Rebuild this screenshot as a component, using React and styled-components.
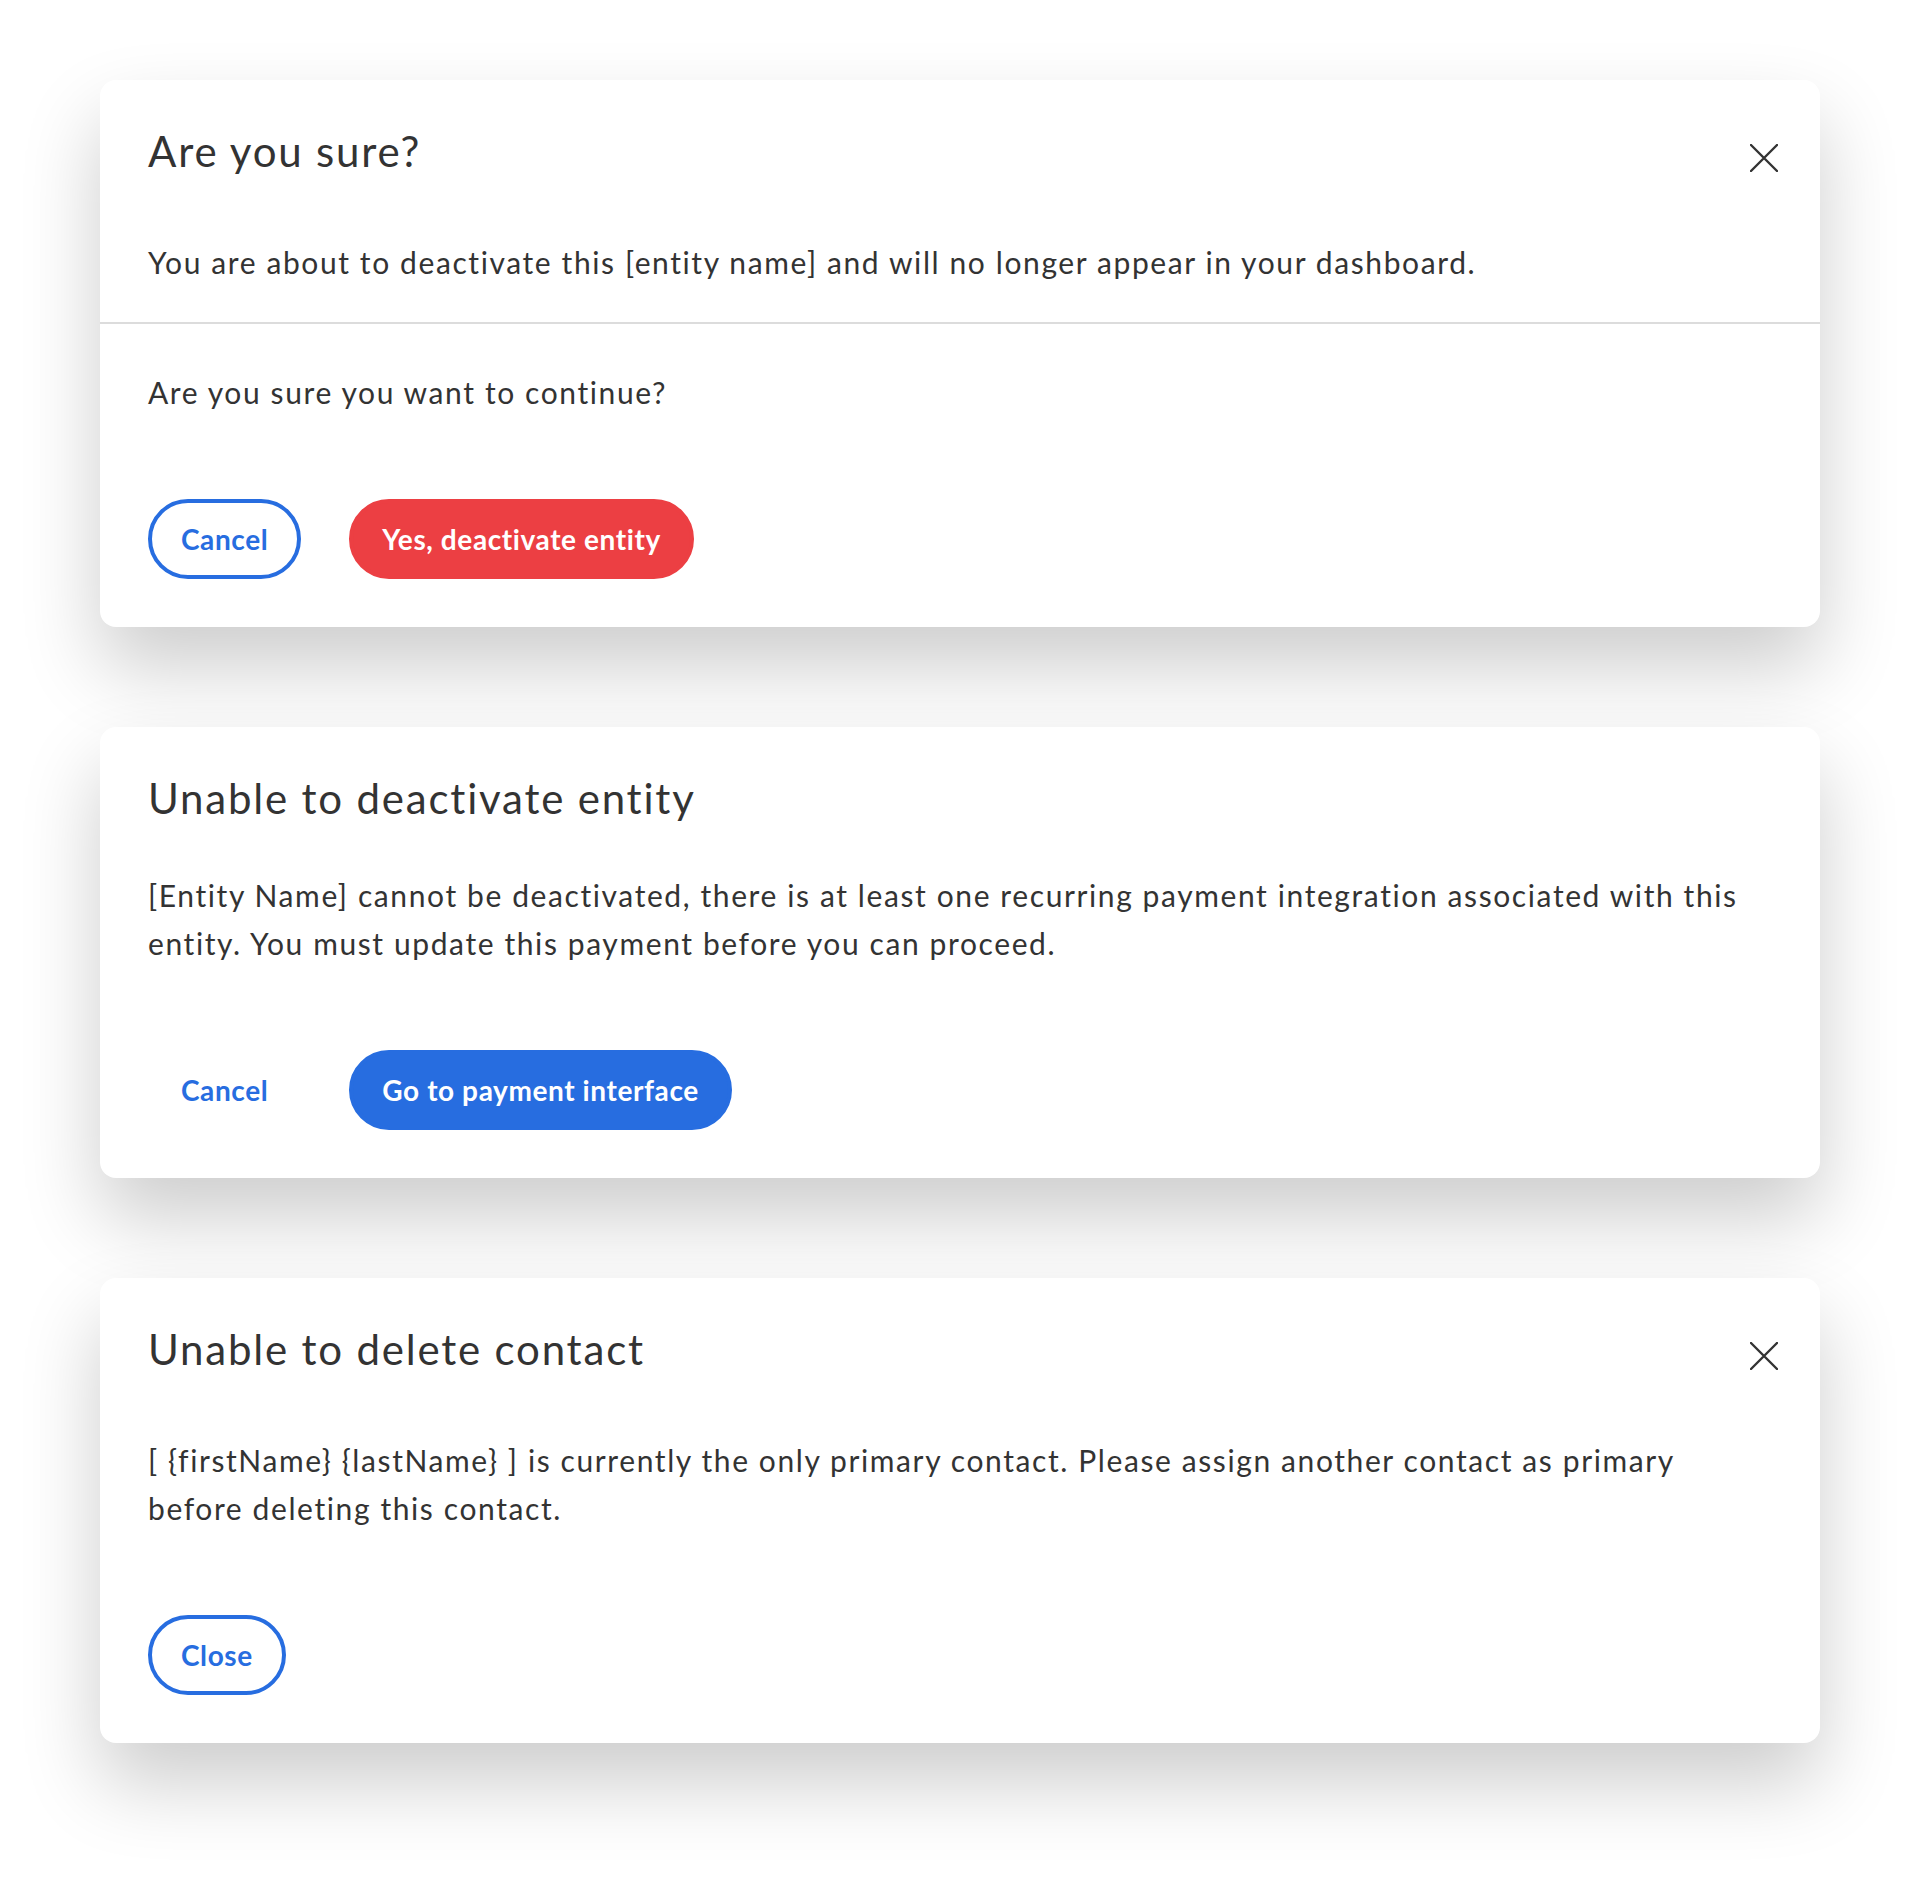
import React from "react";
import styled, { createGlobalStyle } from "styled-components";

const GlobalStyle = createGlobalStyle`
  html, body {
    margin: 0;
    padding: 0;
    background: #ffffff;
  }
  body {
    font-family: "Lato", "Noto Sans", sans-serif;
    color: #333333;
  }
  * {
    box-sizing: border-box;
  }
`;

function CloseIcon() {
  return (
    <svg width="28" height="28" viewBox="0 0 28 28" fill="none">
      <path
        d="M1 1L27 27M27 1L1 27"
        stroke="#333333"
        strokeWidth="2.4"
        strokeLinecap="round"
      />
    </svg>
  );
}

function Modal({ title, onClose, children }) {
  return (
    <Card>
      <Header>
        <Title>{title}</Title>
        {onClose && (
          <CloseButton aria-label="Close" onClick={onClose}>
            <CloseIcon />
          </CloseButton>
        )}
      </Header>
      {children}
    </Card>
  );
}

function App() {
  const noop = () => {};
  return (
    <>
      <GlobalStyle />
      <Page>
        <Modal title="Are you sure?" onClose={noop}>
          <TopSection>
            <Text>
              You are about to deactivate this [entity name] and will no longer
              appear in your dashboard.
            </Text>
          </TopSection>
          <Divider />
          <Section>
            <Text>Are you sure you want to continue?</Text>
            <Actions>
              <Button variant="outline">Cancel</Button>
              <Button variant="danger">Yes, deactivate entity</Button>
            </Actions>
          </Section>
        </Modal>

        <Modal title="Unable to deactivate entity">
          <Section $flush>
            <Text>
              [Entity Name] cannot be deactivated, there is at least one
              recurring payment integration associated with this
              <br />
              entity. You must update this payment before you can proceed.
            </Text>
            <Actions>
              <Button variant="text">Cancel</Button>
              <Button variant="primary">Go to payment interface</Button>
            </Actions>
          </Section>
        </Modal>

        <Modal title="Unable to delete contact" onClose={noop}>
          <Section $flush>
            <Text>
              [ {"{firstName}"} {"{lastName}"} ] is currently the only primary
              contact. Please assign another contact as primary
              <br />
              before deleting this contact.
            </Text>
            <Actions>
              <Button variant="outline">Close</Button>
            </Actions>
          </Section>
        </Modal>
      </Page>
    </>
  );
}

const Page = styled.main`
  display: flex;
  flex-direction: column;
  gap: 100px;
  padding: 80px 100px 140px;
`;

const Card = styled.section`
  background: #ffffff;
  border-radius: 16px;
  box-shadow: 0 40px 80px rgba(0, 0, 0, 0.2);
  padding-bottom: 48px;
`;

const Header = styled.div`
  display: flex;
  justify-content: space-between;
  align-items: flex-start;
  padding: 46px 48px 0;
  margin-bottom: 48px;
`;

const Title = styled.h2`
  margin: 0;
  font-size: 42px;
  line-height: 50px;
  font-weight: 400;
  letter-spacing: 1.8px;
  color: #333333;
`;

const CloseButton = styled.button`
  display: flex;
  align-items: center;
  justify-content: center;
  width: 44px;
  height: 64px;
  margin-right: -14px;
  padding: 0;
  border: none;
  background: transparent;
  cursor: pointer;
`;

const TopSection = styled.div`
  padding: 0 48px 36px;
`;

const Divider = styled.hr`
  margin: 0;
  border: none;
  border-top: 2px solid #dcdcdc;
`;

const Section = styled.div`
  padding: ${(p) => (p.$flush ? "0 48px" : "44px 48px 0")};
`;

const Text = styled.p`
  margin: 0;
  font-size: 30px;
  line-height: 48px;
  letter-spacing: 1.6px;
  color: #333333;
`;

const Actions = styled.div`
  display: flex;
  gap: 48px;
  margin-top: 83px;
`;

const variants = {
  outline: { bg: "transparent", border: "#276de0", color: "#276de0" },
  text: { bg: "transparent", border: "transparent", color: "#276de0" },
  primary: { bg: "#276de0", border: "#276de0", color: "#ffffff" },
  danger: { bg: "#ec3f43", border: "#ec3f43", color: "#ffffff" },
};

const Button = styled.button`
  height: 80px;
  padding: 0 29px;
  border-radius: 40px;
  border: 4px solid ${(p) => variants[p.variant].border};
  background: ${(p) => variants[p.variant].bg};
  color: ${(p) => variants[p.variant].color};
  font-family: "Lato", "Noto Sans", sans-serif;
  font-size: 28px;
  font-weight: 700;
  letter-spacing: 0.6px;
  cursor: pointer;
`;

export default App;
